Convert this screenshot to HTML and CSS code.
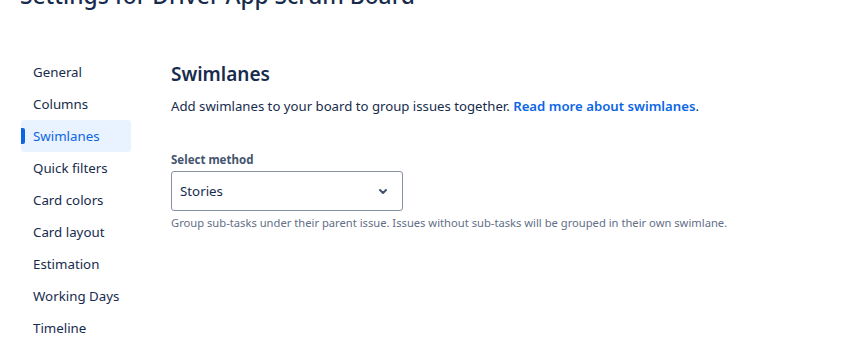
FILE: index.html
```html
<!DOCTYPE html>
<html lang="en">
<head>
    <meta charset="UTF-8">
    <meta name="viewport" content="width=device-width, initial-scale=1.0">
    <title>Board Settings</title>
    <link rel="stylesheet" href="styles.css">
</head>
<body>
    <div class="page">
        <h1 class="page-title">Settings for Driver App Scrum Board</h1>
        <div class="layout">
            <nav class="sidebar">
                <a class="nav-item" href="#">General</a>
                <a class="nav-item" href="#">Columns</a>
                <a class="nav-item active" href="#">Swimlanes</a>
                <a class="nav-item" href="#">Quick filters</a>
                <a class="nav-item" href="#">Card colors</a>
                <a class="nav-item" href="#">Card layout</a>
                <a class="nav-item" href="#">Estimation</a>
                <a class="nav-item" href="#">Working Days</a>
                <a class="nav-item" href="#">Timeline</a>
            </nav>
            <main class="content">
                <h2>Swimlanes</h2>
                <p class="intro">Add swimlanes to your board to group issues together. <a href="#">Read more about swimlanes</a>.</p>

                <label class="field-label" for="method">Select method</label>
                <div class="select" id="method">
                    <span>Stories</span>
                    <svg width="16" height="16" viewBox="0 0 16 16" aria-hidden="true">
                        <path d="M5 7 L8 10 L11 7" fill="none" stroke="#44546f" stroke-width="2" stroke-linecap="round" stroke-linejoin="round"/>
                    </svg>
                </div>
                <p class="helper">Group sub-tasks under their parent issue. Issues without sub-tasks will be grouped in their own swimlane.</p>
            </main>
        </div>
    </div>
</body>
</html>
```

FILE: styles.css
```css
/* Board settings page */
body {
    margin: 0;
    font-family: 'Noto Sans', sans-serif;
    background-color: #fff;
    color: #172b4d;
}

.page {
    padding: 0 20px;
}

.page-title {
    margin: -18px 0 0;
    font-size: 22.8px;
    line-height: 28px;
    font-weight: 500;
    color: #172b4d;
}

.layout {
    display: flex;
    margin-top: 46px;
}

.sidebar {
    display: flex;
    flex-direction: column;
    width: 110px;
    margin-left: 1px;
}

.nav-item {
    position: relative;
    display: block;
    height: 32px;
    line-height: 32px;
    padding-left: 12px;
    font-size: 13.3px;
    color: #172b4d;
    text-decoration: none;
    border-radius: 3px;
}

.nav-item.active {
    background-color: #e9f2ff;
    color: #0c66e4;
}

.nav-item.active::before {
    content: "";
    position: absolute;
    left: 0;
    top: 8px;
    width: 4px;
    height: 16px;
    background-color: #0c66e4;
    border-radius: 0 2px 2px 0;
}

.content {
    padding-left: 40px;
    padding-top: 6px;
}

h2 {
    margin: 0;
    font-size: 19px;
    line-height: 24px;
    font-weight: 600;
    color: #172b4d;
}

.intro {
    margin: 10px 0 0;
    font-size: 13.2px;
    line-height: 20px;
}

.intro a {
    color: #0c66e4;
    font-weight: 600;
    text-decoration: none;
}

.field-label {
    display: block;
    margin-top: 36px;
    font-size: 11.5px;
    line-height: 16px;
    font-weight: 700;
    color: #44546f;
}

.select {
    display: flex;
    align-items: center;
    justify-content: space-between;
    box-sizing: border-box;
    width: 232px;
    height: 40px;
    margin-top: 3px;
    padding: 0 11px 0 8px;
    border: 1px solid #8590a2;
    border-radius: 3px;
    font-size: 13.3px;
}

.helper {
    margin: 4px 0 0;
    font-size: 11.2px;
    line-height: 16px;
    color: #626f86;
}
```
